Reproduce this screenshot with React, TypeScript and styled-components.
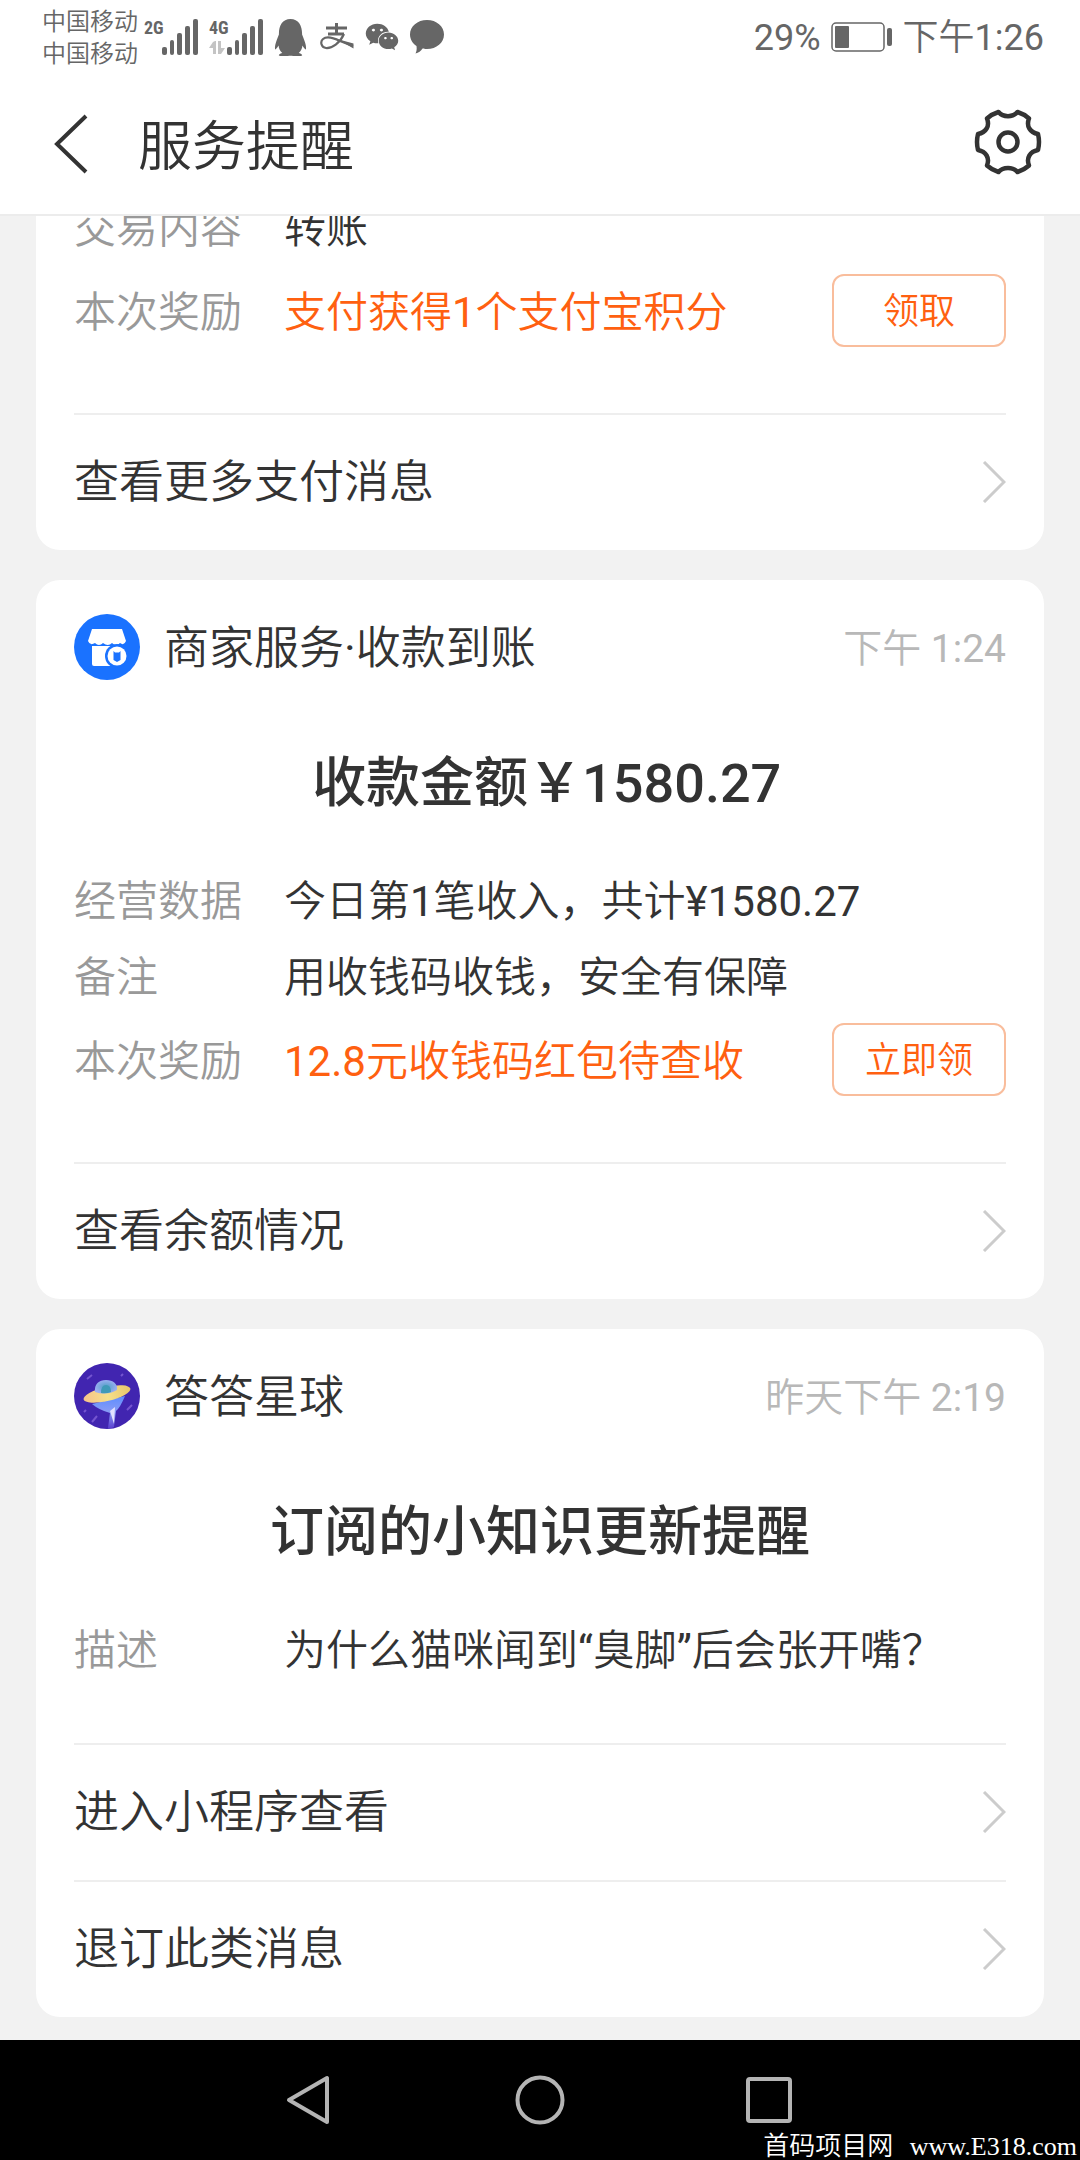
import React from "react";
import styled, { createGlobalStyle } from "styled-components";
import { FaQq, FaWeixin } from "react-icons/fa";

const GlobalStyle = createGlobalStyle`
  * { box-sizing: border-box; }
  body {
    margin: 0;
    background: #f2f2f2;
    color: #333;
    font-family: Roboto, "Noto Sans CJK SC DemiLight", "Noto Sans CJK SC", sans-serif;
    font-weight: 400;
  }
`;

const Screen = styled.div`
  display: flex;
  flex-direction: column;
  height: 100vh;
  overflow: hidden;
`;

const StatusBar = styled.div`
  display: flex;
  align-items: center;
  justify-content: space-between;
  height: 74px;
  padding: 0 36px 0 42px;
  background: #fff;
  color: #666;
`;

const StatusGroup = styled.div<{ $gap: number }>`
  display: flex;
  align-items: center;
  gap: ${(p) => p.$gap}px;
`;

const Carriers = styled.div`
  padding-top: 2px;
  font-size: 24px;
  line-height: 32px;
  margin-right: -5px;
`;

const Signal = styled.div`
  display: flex;
  align-items: stretch;
  height: 36px;
`;

const NetworkType = styled.div`
  display: flex;
  flex-direction: column;
  justify-content: space-between;
  width: 18px;
  font: 700 18px/18px "Roboto Condensed", "Liberation Sans Narrow", "Liberation Sans", sans-serif;
`;

const StatusIcons = styled.div`
  display: flex;
  align-items: center;
  gap: 11px;
  margin-left: -2px;
`;

const StatusText = styled.span`
  padding-top: 2px;
  font-size: 36px;
  line-height: 48px;
`;

const Header = styled.header`
  display: flex;
  align-items: center;
  height: 142px;
  padding: 0 38px 0 46px;
  background: #fff;
  border-bottom: 2px solid #ececec;
`;

const Title = styled.h1`
  flex: 1;
  margin: 0 0 0 44px;
  padding-top: 8px;
  font-size: 54px;
  line-height: 72px;
  font-weight: 400;
`;

const IconButton = styled.button`
  display: flex;
  padding: 0;
  border: 0;
  background: none;
  color: #333;
`;

const SettingsButton = styled(IconButton)`
  padding-bottom: 4px;
`;

const Feed = styled.main`
  flex: 1;
  min-height: 0;
  display: flex;
  flex-direction: column;
  justify-content: flex-end;
  gap: 30px;
  padding: 0 36px 23px;
  overflow: hidden;
`;

const Card = styled.article`
  flex: none;
  padding: 34px 38px 0;
  border-radius: 24px;
  background: #fff;
`;

const CardHeader = styled.div`
  display: flex;
  align-items: center;
  gap: 24px;
  height: 66px;
`;

const Sender = styled.h2`
  flex: 1;
  margin: 0;
  padding-top: 4px;
  font-size: 45px;
  line-height: 66px;
  font-weight: 400;
`;

const Time = styled.time`
  padding-top: 4px;
  color: #b8b8b8;
  font-size: 39px;
  line-height: 66px;
`;

const Headline = styled.h3`
  margin: 66px 0 42px;
  font-family: Roboto, "Noto Sans CJK SC", sans-serif;
  font-size: 54px;
  line-height: 76px;
  font-weight: 500;
  text-align: center;
  white-space: pre-wrap;
`;

const Details = styled.dl`
  margin: 0 0 54px;
`;

const Detail = styled.div<{ $reward?: boolean }>`
  display: flex;
  align-items: center;
  height: ${(p) => (p.$reward ? 92 : 76)}px;
  font-size: 42px;
  line-height: 60px;
`;

const Label = styled.dt`
  flex: none;
  width: 210px;
  color: #999;
`;

const Value = styled.dd<{ $reward?: boolean }>`
  flex: 1;
  margin: 0;
  color: ${(p) => (p.$reward ? "#ff6010" : "#333")};
`;

const ClaimButton = styled.button`
  width: 174px;
  height: 73px;
  margin-bottom: 6px;
  padding: 4px 0 0;
  border: 2px solid #f9bd9c;
  border-radius: 12px;
  background: #fff;
  color: #ff6010;
  font: inherit;
  font-size: 36px;
`;

const ActionLink = styled.a`
  display: flex;
  align-items: center;
  justify-content: space-between;
  height: 137px;
  border-top: 2px solid #eee;
  color: #333;
  font-size: 45px;
  line-height: 66px;
  text-decoration: none;

  svg {
    margin-bottom: 2px;
  }
`;

const SystemNav = styled.nav`
  position: relative;
  display: flex;
  align-items: center;
  justify-content: center;
  gap: 180px;
  height: 120px;
  background: #000;
`;

const Watermark = styled.div`
  position: absolute;
  right: 3px;
  bottom: 0;
  color: #fff;
  font-size: 26px;
  line-height: 26px;
`;

const WatermarkUrl = styled.span`
  padding-left: 10px;
  font-family: "Liberation Serif", serif;
`;

function SignalBars() {
  return (
    <svg width="36" height="36" viewBox="0 0 36 36" fill="currentColor">
      <rect x="0" y="28" width="5" height="8" rx="2" />
      <rect x="8" y="21" width="4" height="15" rx="2" />
      <rect x="15" y="14" width="5" height="22" rx="2" />
      <rect x="23" y="7" width="5" height="29" rx="2" />
      <rect x="31" y="0" width="5" height="36" rx="2" />
    </svg>
  );
}

function DataArrows() {
  return (
    <svg width="16" height="14" viewBox="0 0 16 14" fill="#c4c4c4">
      <path d="M4 1L6 0H7V13H4V7H0Z" />
      <path d="M9 0h3v7h4l-4 6H9z" />
    </svg>
  );
}

function PayMark() {
  return (
    <svg width="34" height="28" viewBox="0 0 34 28" fill="none" stroke="currentColor">
      <path d="M6 5H27M16.500 0V11M8 11H24" strokeWidth="3" />
      <path d="M24 11C20 20 12 25.500 6 25C1 24.500 0 18.500 3 16C7 12.500 13 14.500 20 18L33 23" strokeWidth="2.200" />
      <path d="M17 16L33.500 20.500V25.500Z" fill="currentColor" stroke="none" />
    </svg>
  );
}

function BubbleIcon() {
  return (
    <svg width="34" height="34" viewBox="0 0 34 34" fill="currentColor">
      <path d="M17 0C26.500 0 34 6.200 34 14.500S26.500 29 17 29C15 29 13.500 28.800 12.500 28.500C11 31 8.500 33 5.500 33.500C6.500 31.500 7 29 6.500 26C2.500 23.500 0 19 0 14.500C0 6.200 7.500 0 17 0Z" />
    </svg>
  );
}

function Battery() {
  return (
    <svg width="62" height="30" viewBox="0 0 62 30">
      <rect x="1" y="1" width="52" height="28" rx="4" fill="none" stroke="currentColor" strokeWidth="1.500" />
      <rect x="4" y="4" width="14" height="22" rx="1" fill="currentColor" />
      <rect x="56" y="6" width="5" height="18" rx="2" fill="currentColor" />
    </svg>
  );
}

function BackIcon() {
  return (
    <svg width="48" height="60" viewBox="0 0 48 60" fill="none" stroke="currentColor" strokeWidth="4">
      <path d="M40 2L11 30L40 58" />
    </svg>
  );
}

function GearIcon() {
  return (
    <svg width="68" height="68" viewBox="-34 -34 68 68" fill="none" stroke="currentColor" strokeWidth="4.500" strokeLinejoin="round">
      <path d="M-9.500 -30Q-16 -28 -21 -23.500C-18 -16 -22 -9.500 -30 -8Q-32 0 -30 8C-22 9.500 -18 16 -21 23.500Q-16 28 -9.500 30C-5 24.500 5 24.500 9.500 30Q16 28 21 23.500C18 16 22 9.500 30 8Q32 0 30 -8C22 -9.500 18 -16 21 -23.500Q16 -28 9.500 -30C5 -24.500 -5 -24.500 -9.500 -30Z" />
      <circle r="9.500" />
    </svg>
  );
}

function Chevron() {
  return (
    <svg width="24" height="42" viewBox="0 0 24 42" fill="none" stroke="#ccc" strokeWidth="3">
      <path d="M2 1L22 21L2 41" />
    </svg>
  );
}

function ShopAvatar() {
  return (
    <svg width="66" height="66" viewBox="0 0 66 66">
      <circle cx="33" cy="33" r="33" fill="#1a72ff" />
      <path d="M18 15H48L52 27Q50 32 46 29Q42 33 38 29Q34 33 29 29Q25 33 21 29Q16 32 14 27Z" fill="#fff" />
      <path d="M18 32H48V52H20Q18 52 18 50Z" fill="#fff" />
      <circle cx="43" cy="42" r="12" fill="#1a72ff" />
      <circle cx="43" cy="42" r="9.500" fill="#fff" />
      <path d="M39.500 37L41 38.500H45L46.500 37V46L43 48L39.500 46Z" fill="#1a72ff" />
    </svg>
  );
}

function PlanetAvatar() {
  return (
    <svg width="66" height="66" viewBox="0 0 66 66">
      <defs>
        <linearGradient id="beam" x1="0" y1="0" x2="0" y2="1">
          <stop offset="0" stopColor="#5d8dff" />
          <stop offset="0.500" stopColor="#8a9cf5" />
          <stop offset="1" stopColor="#5a3fd0" />
        </linearGradient>
        <linearGradient id="disc" x1="0" y1="0" x2="1" y2="0">
          <stop offset="0" stopColor="#f6c28a" />
          <stop offset="0.500" stopColor="#f5e08a" />
          <stop offset="1" stopColor="#e8c56a" />
        </linearGradient>
        <radialGradient id="dome">
          <stop offset="0" stopColor="#4f9fc4" />
          <stop offset="1" stopColor="#9aaef2" />
        </radialGradient>
      </defs>
      <circle cx="33" cy="33" r="33" fill="#4125b0" />
      <path d="M18 41L51 33Q46 45 42 48L40 64Q37 66 34 65L36 50Q25 47 18 41Z" fill="url(#beam)" />
      <path d="M36 48L41 44L40 61Z" fill="#e3e2ff" />
      <ellipse cx="33" cy="31" rx="24" ry="7" transform="rotate(-13 33 31)" fill="url(#disc)" />
      <path d="M21 29C20 21 25 17 32 17S44 21 43 27Q33 33 21 29Z" fill="url(#dome)" />
      <path d="M27 30Q27 22 32 22T37 29Q32 31 27 30Z" fill="#3f9ab8" />
      <path d="M13 16L18 12M18 59L23 53M53 47L58 42M47 13L49 11M10 49L12 47" stroke="#7455d0" strokeWidth="2" />
    </svg>
  );
}

interface DetailItem {
  label: string;
  value: string;
  claim?: string;
}

interface Notice {
  avatar?: React.ReactNode;
  sender?: string;
  time?: string;
  headline?: string;
  details: DetailItem[];
  actions: string[];
}

const notices: Notice[] = [
  {
    details: [
      { label: "交易内容", value: "转账" },
      { label: "本次奖励", value: "支付获得1个支付宝积分", claim: "领取" },
    ],
    actions: ["查看更多支付消息"],
  },
  {
    avatar: <ShopAvatar />,
    sender: "商家服务·收款到账",
    time: "下午 1:24",
    headline: " 收款金额￥1580.27",
    details: [
      { label: "经营数据", value: "今日第1笔收入，共计¥1580.27" },
      { label: "备注", value: "用收钱码收钱，安全有保障" },
      { label: "本次奖励", value: "12.8元收钱码红包待查收", claim: "立即领" },
    ],
    actions: ["查看余额情况"],
  },
  {
    avatar: <PlanetAvatar />,
    sender: "答答星球",
    time: "昨天下午 2:19",
    headline: "订阅的小知识更新提醒",
    details: [{ label: "描述", value: "为什么猫咪闻到“臭脚”后会张开嘴？" }],
    actions: ["进入小程序查看", "退订此类消息"],
  },
];

function NoticeCard({ notice }: { notice: Notice }) {
  return (
    <Card>
      {notice.sender && (
        <CardHeader>
          {notice.avatar}
          <Sender>{notice.sender}</Sender>
          <Time>{notice.time}</Time>
        </CardHeader>
      )}
      {notice.headline && <Headline>{notice.headline}</Headline>}
      <Details>
        {notice.details.map((d) => (
          <Detail key={d.label} $reward={!!d.claim}>
            <Label>{d.label}</Label>
            <Value $reward={!!d.claim}>{d.value}</Value>
            {d.claim && <ClaimButton type="button">{d.claim}</ClaimButton>}
          </Detail>
        ))}
      </Details>
      {notice.actions.map((a) => (
        <ActionLink key={a} href="#">
          {a}
          <Chevron />
        </ActionLink>
      ))}
    </Card>
  );
}

function SystemButton({ label, children }: { label: string; children: React.ReactNode }) {
  return (
    <IconButton type="button" aria-label={label}>
      <svg width="50" height="50" viewBox="0 0 50 50" fill="none" stroke="#b4b4b4" strokeWidth="4" strokeLinejoin="round">
        {children}
      </svg>
    </IconButton>
  );
}

export default function App() {
  return (
    <Screen lang="zh-CN">
      <GlobalStyle />
      <StatusBar>
        <StatusGroup $gap={11}>
          <Carriers>
            <div>中国移动</div>
            <div>中国移动</div>
          </Carriers>
          <Signal>
            <NetworkType>2G</NetworkType>
            <SignalBars />
          </Signal>
          <Signal>
            <NetworkType>
              4G
              <DataArrows />
            </NetworkType>
            <SignalBars />
          </Signal>
          <StatusIcons>
            <FaQq size={37} />
            <PayMark />
            <FaWeixin size={34} />
            <BubbleIcon />
          </StatusIcons>
        </StatusGroup>
        <StatusGroup $gap={10}>
          <StatusText>29%</StatusText>
          <Battery />
          <StatusText>下午1:26</StatusText>
        </StatusGroup>
      </StatusBar>
      <Header>
        <IconButton type="button" aria-label="返回">
          <BackIcon />
        </IconButton>
        <Title>服务提醒</Title>
        <SettingsButton type="button" aria-label="设置">
          <GearIcon />
        </SettingsButton>
      </Header>
      <Feed>
        {notices.map((n, i) => (
          <NoticeCard key={i} notice={n} />
        ))}
      </Feed>
      <SystemNav>
        <SystemButton label="返回">
          <path d="M42 3V47L4 25Z" />
        </SystemButton>
        <SystemButton label="主页">
          <circle cx="25" cy="25" r="22.500" />
        </SystemButton>
        <SystemButton label="最近任务">
          <rect x="3" y="4" width="42" height="42" rx="2" />
        </SystemButton>
        <Watermark>
          首码项目网<WatermarkUrl> www.E318.com</WatermarkUrl>
        </Watermark>
      </SystemNav>
    </Screen>
  );
}
